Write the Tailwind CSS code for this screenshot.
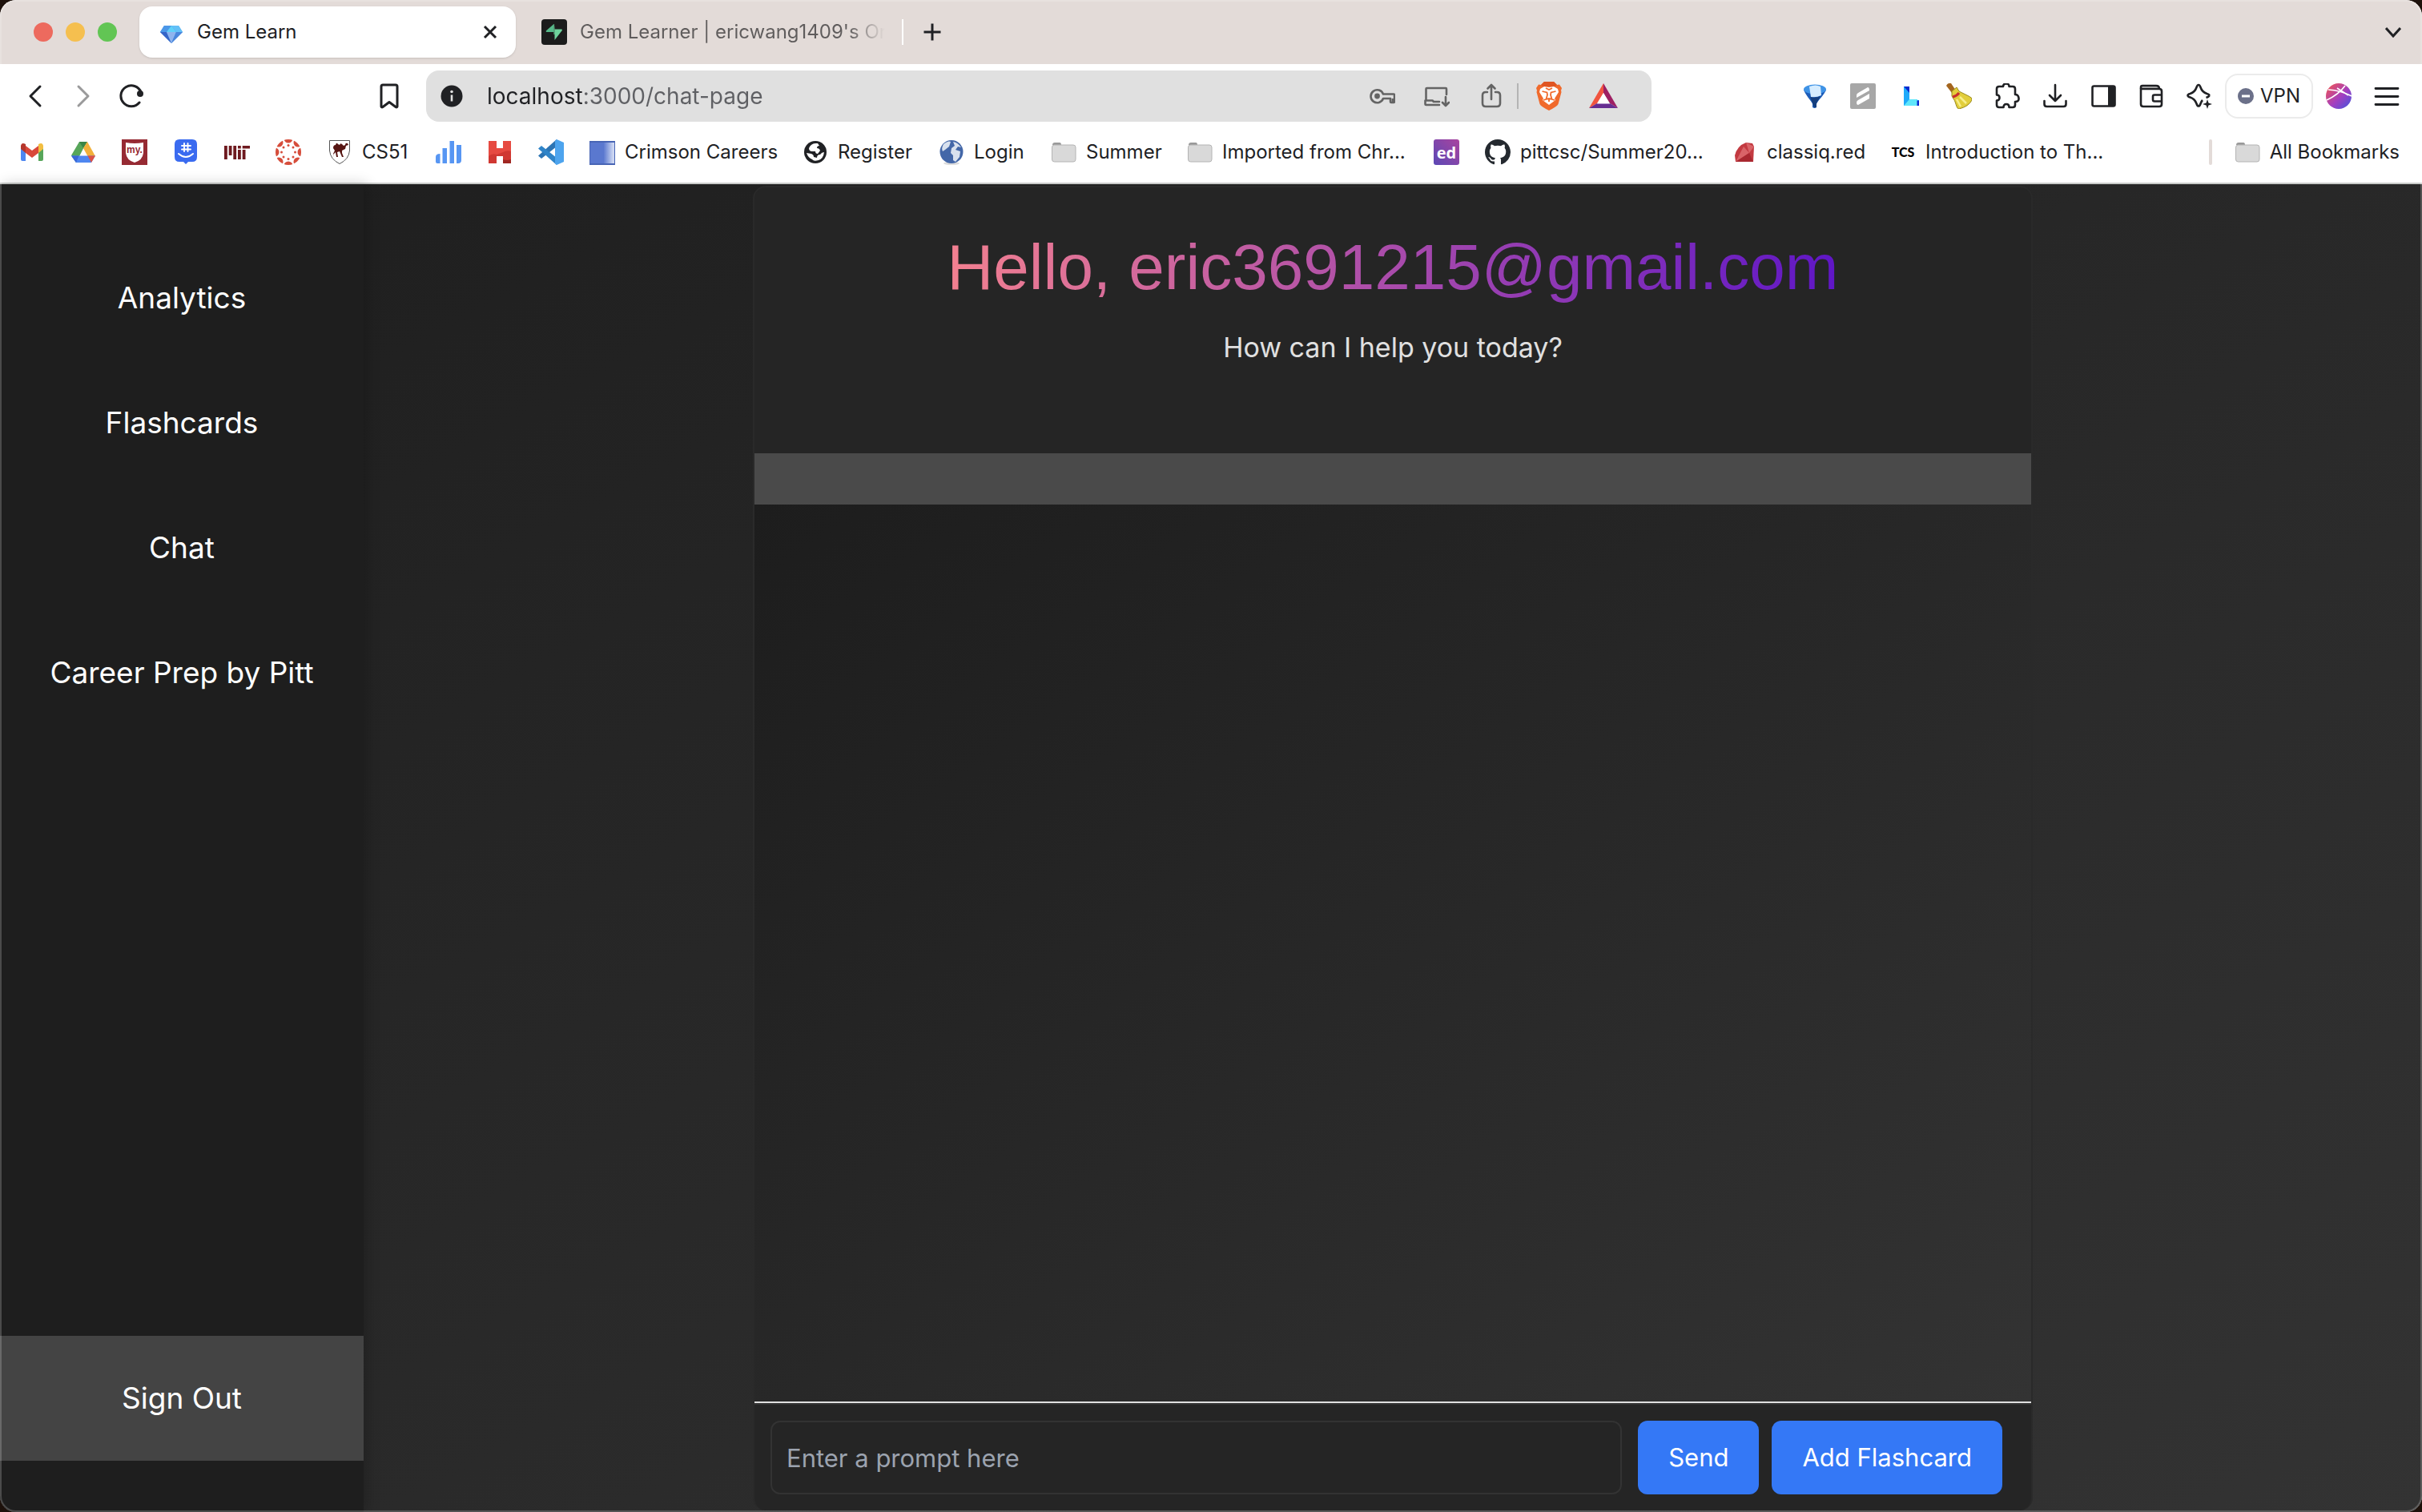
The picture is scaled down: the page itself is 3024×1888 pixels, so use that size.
<!DOCTYPE html>
<html lang="en">
<head>
    <meta charset="UTF-8">
    <meta name="viewport" content="width=device-width, initial-scale=1.0">
    <title>Gem Learn</title>
    <script src="https://cdn.jsdelivr.net/npm/@tailwindcss/browser@4"></script>
</head>
<body class="bg-[#1d110b] font-['Inter',sans-serif] text-[#202124]">
    <div class="relative flex h-screen flex-col overflow-hidden rounded-[20px] bg-white">

        <!-- Tab strip -->
        <div class="flex h-20 shrink-0 items-center bg-[#e3dbd8] pr-[26px] text-[24px]">
            <div class="flex w-[174px] shrink-0 gap-4 pl-[42px]">
                <span class="size-6 rounded-full bg-[#ed6a5e]"></span>
                <span class="size-6 rounded-full bg-[#f5bf4f]"></span>
                <span class="size-6 rounded-full bg-[#62c554]"></span>
            </div>
            <div class="flex h-16 w-[470px] shrink-0 items-center rounded-2xl bg-white pr-5 pl-6 shadow-sm">
                <svg class="mr-4 size-8" viewBox="0 0 32 32">
                    <path d="M7 8h18l5 8-14 14L2 16z" fill="#4a90e2"/>
                    <path d="M7 8h9l-6 8H2z" fill="#4b97e8"/>
                    <path d="M16 8h9l5 8h-8z" fill="#63c0f7"/>
                    <path d="M16 8l6 8H10z" fill="#5fd0f9"/>
                    <path d="M2 16h8l6 14z" fill="#3565c8"/>
                    <path d="M10 16h12l-6 14z" fill="#8fb4ee"/>
                    <path d="M22 16h8L16 30z" fill="#4a86dc"/>
                </svg>
                <a href="#" class="flex-1">Gem Learn</a>
                <button aria-label="Close tab">
                    <svg class="size-6" viewBox="0 0 24 24" fill="none" stroke="#202124" stroke-width="3"><path d="M5 5l14 14M19 5L5 19"/></svg>
                </button>
            </div>
            <div class="flex h-16 w-[482px] shrink-0 items-center pl-8">
                <svg class="mr-4 size-8" viewBox="0 0 32 32">
                    <rect width="32" height="32" rx="4" fill="#1c1c1c"/>
                    <path d="M15.500 6v10H6.500c-1-.2-1-1-.5-1.800z" fill="#56b98a"/>
                    <path d="M16.500 26V12.500H25c1 .2 1.200 1 .6 1.800z" fill="#6fd39c"/>
                    <path d="M15.500 6v13h1V12.500L16 6z" fill="#6fd39c"/>
                </svg>
                <a href="#" class="w-[381px] overflow-hidden whitespace-nowrap bg-linear-[90deg,#5f5c5c_335px,#e3dbd8_381px] bg-clip-text text-transparent">Gem Learner | ericwang1409's Org</a>
            </div>
            <span class="h-8 w-0.5 bg-white"></span>
            <button class="ml-6" aria-label="New tab">
                <svg class="size-6" viewBox="0 0 24 24" fill="none" stroke="#202124" stroke-width="3"><path d="M12 1.500v21M1.500 12h21"/></svg>
            </button>
            <button class="ml-auto" aria-label="Search tabs">
                <svg class="size-5" viewBox="0 0 20 20" fill="none" stroke="#202124" stroke-width="3"><path d="M1 5l9 10 9-10"/></svg>
            </button>
        </div>

        <!-- Toolbar -->
        <div class="flex h-20 shrink-0 items-center px-7">
            <button aria-label="Back"><svg class="size-8" viewBox="0 0 32 32" fill="none" stroke="#202124" stroke-width="3" stroke-linecap="round" stroke-linejoin="round"><path d="M22 4L10 16l12 12"/></svg></button>
            <button class="ml-7" aria-label="Forward"><svg class="size-8" viewBox="0 0 32 32" fill="none" stroke="#9a9a9b" stroke-width="3" stroke-linecap="round" stroke-linejoin="round"><path d="M10 4l12 12-12 12"/></svg></button>
            <button class="ml-7" aria-label="Reload"><svg class="size-8" viewBox="0 0 32 32" fill="none" stroke="#202124" stroke-width="3" stroke-linecap="round"><path d="M26 24A13 13 0 1 1 28 11"/><circle cx="27" cy="13" r="4" fill="#202124" stroke="none"/></svg></button>
            <button class="ml-[290px]" aria-label="Bookmark this tab"><svg class="size-8" viewBox="0 0 32 32" fill="none" stroke="#202124" stroke-width="3" stroke-linejoin="round"><path d="M6 4q0-2 2-2h16q2 0 2 2v25q-.5 1.500-2 .5l-8-6-8 6q-1.500 1-2-.5z"/></svg></button>
            <div class="ml-[30px] flex h-16 w-[1530px] items-center rounded-2xl bg-[#e0e0e0] pr-[42px] pl-4">
                <button aria-label="Site information">
                    <svg class="size-8" viewBox="0 0 32 32"><circle cx="16" cy="16" r="13.500" fill="#202124"/><circle cx="16" cy="10.500" r="1.800" fill="#e0e0e0"/><path d="M16 14.500v8" stroke="#e0e0e0" stroke-width="2.600"/></svg>
                </button>
                <input aria-label="Address" value="localhost:3000/chat-page" class="ml-7 min-w-0 flex-1 bg-linear-[90deg,#202124_122px,#5f6064_122px] bg-clip-text text-[28px] text-transparent">
                <div class="flex items-center gap-9 text-[#646464]">
                    <button aria-label="Passwords"><svg class="size-8" viewBox="0 0 32 32" fill="none" stroke="currentColor" stroke-width="2.600" stroke-linejoin="round"><path d="M17 13.500h13q1 0 1 1V23q0 1-1 1h-3q-1 0-1-1v-4h-9a8 8 0 1 1 0-5.500zM29 19v4"/><circle cx="9.500" cy="16" r="3.400" fill="currentColor" stroke="none"/></svg></button>
                    <button aria-label="Install app"><svg class="size-8" viewBox="0 0 32 32" fill="none" stroke="currentColor" stroke-width="2.600" stroke-linecap="round" stroke-linejoin="round"><path d="M28 14V7q0-1-1-1H3.500q-1 0-1 1v14M19 27H2.500q-1 0-1-1v-4.500h9l1.500 1.500h7M27 17v10M23 24l4 4 4-4"/></svg></button>
                    <button aria-label="Share"><svg class="size-8" viewBox="0 0 32 32" fill="none" stroke="currentColor" stroke-width="2.600" stroke-linecap="round" stroke-linejoin="round"><path d="M11 11H9q-4 0-4 4v10q0 4 4 4h14q4 0 4-4V15q0-4-4-4h-2M16 20V2M11.500 6.500L16 2l4.500 4.500"/></svg></button>
                </div>
                <span class="mr-[22px] ml-4 h-8 w-0.5 bg-[#b4b4b4]"></span>
                <button aria-label="Brave Shields">
                    <svg class="h-9 w-8" viewBox="0 0 32 36">
                        <path d="M10 0h12l4 4 3-.5 3 4.500-1 3 .5 2-4 15Q26 31 16 36 6 31 4.500 28L.500 13 1 11 0 8l3-4.500L6 4z" fill="#f06a2c"/>
                        <path d="M10 0h12l4 4-4 3-6-1-6 1-4-3z" fill="#e05522"/>
                        <path d="M10 6l6 1 6-1 5 3 1 4-5 8 1 2-8 6-8-6 1-2-5-8 1-4z" fill="#fff"/>
                        <path d="M7.500 12l6 1.500.5 3-1.500 5h7l-1.500-5 .5-3 6-1.500M9 23l7-2 7 2M16 22v3M12 8l4 2 4-2" fill="none" stroke="#f06a2c" stroke-width="1.800"/>
                    </svg>
                </button>
                <button class="ml-[34px]" aria-label="Brave Rewards">
                    <svg class="h-8 w-9" viewBox="0 0 36 32"><path d="M18 0L0 31l10-6 8-13z" fill="#f1543f"/><path d="M18 0l18 31-10-6-8-13z" fill="#9e1f63"/><path d="M0 31h36l-10-6H10z" fill="#662d91"/><path d="M18 12l8 13.500H10z" fill="#fff"/></svg>
                </button>
            </div>
            <div class="ml-auto flex items-center gap-7">
                <button aria-label="Filter extension"><svg class="size-8" viewBox="0 0 32 32"><path d="M2 8q1 4 8 13 3 4 3 5v4q3 2 5 0v-4q0-1 3-5 8-9 9-13z" fill="#1c5cb8"/><ellipse cx="16" cy="7.500" rx="14" ry="6" fill="#3f93e6"/><path d="M9 4q8-3 14 0l1 11q-6 3-13 2z" fill="#d5ecff"/><path d="M10 17q7 2 13-1l-5 9v5h-3z" fill="#153f7e"/></svg></button>
                <button aria-label="Scribe"><svg class="size-8" viewBox="0 0 32 32"><rect width="32" height="32" rx="2" fill="#a7a7a7"/><path d="M8 15q0-2 2-3l12-7q2 0 2 4L8 18zM8 24q0-2 2-3l14-8v6L10 27q-2 0-2-3z" fill="#fff"/></svg></button>
                <button aria-label="L extension"><svg class="size-8" viewBox="0 0 32 32"><path d="M7 4h7v17h12v7H7z" fill="#1fa9fa"/><path d="M7 28l7-8h10v8z" fill="#5fe6fb"/><path d="M7 4h7v8zM23.500 21.500H26V28h-2.500z" fill="#0a2bd0"/></svg></button>
                <button aria-label="Cleaner"><svg class="size-8" viewBox="0 0 32 32"><path d="M0 3q2-4 6-3l6 9-5 3z" fill="#a4661f"/><path d="M7 10l6-5 3 5 12 6q5 2 4 5-4 8-16 11-2 0-3-3-2-8-6-13z" fill="#e2ce3c" stroke="#9a8a1c"/><path d="M8 17q5-1 8-5" fill="none" stroke="#c9302c" stroke-width="3"/><path d="M13 20l5 9M17 17l8 8" stroke="#f7ee8c" stroke-width="2.500"/></svg></button>
                <button aria-label="Extensions"><svg class="size-8" viewBox="0 0 32 32" fill="none" stroke="#202124" stroke-width="2.600" stroke-linejoin="round"><path d="M3 7q0-3 3-3h5q0-3.500 3.800-3.500T18.500 4H23q3 0 3 3v7q4 0 4.500 4.500T26 23v4q0 3-3 3h-4.500q0-4-3.500-4t-3.500 4H6q-3 0-3-3v-5.500q3.500 0 3.500-3.500T3 14.500z"/></svg></button>
                <button aria-label="Downloads"><svg class="size-8" viewBox="0 0 32 32" fill="none" stroke="#202124" stroke-width="2.600" stroke-linecap="round" stroke-linejoin="round"><path d="M16 2v20M9 15l7 7 7-7M2.500 22v4q0 3 3 3h21q3 0 3-3v-4"/></svg></button>
                <button aria-label="Side panel"><svg class="size-8" viewBox="0 0 32 32"><rect x="2.500" y="3.500" width="28" height="25" rx="2" fill="none" stroke="#202124" stroke-width="2.600"/><path d="M22 3h8v26h-8z" fill="#202124"/></svg></button>
                <button aria-label="Wallet"><svg class="size-8" viewBox="0 0 32 32" fill="none" stroke="#202124" stroke-width="2.600" stroke-linejoin="round"><path d="M3 7V5q0-2 2-2h17q4 0 4 4" fill="#c9c9c9"/><path d="M3 7v19q0 3 3 3h20q3 0 3-3V10q0-3-3-3zM29 14.500H20q-2 0-2 2v4q0 2 2 2h9"/></svg></button>
                <button aria-label="Leo AI"><svg class="size-8" viewBox="0 0 32 32" fill="none" stroke="#202124" stroke-width="2.600" stroke-linejoin="round"><path d="M15 2q1.500 0 2.500 3 2 6 8 8 3 .8 3 2.500M15 2q-1.500 0-2.500 3-2 6-8 8-3 .8-3 2.200t3 2.300q6 2 8 8 1 3 2.500 3t2.500-3q1-3 2.500-4.500M28.500 15.500q-1 1.500-4 2.500"/><path d="M26 20l1.500 4.500L32 26l-4.500 1.500L26 32l-1.500-4.500L20 26l4.500-1.500z" fill="#202124" stroke="none"/></svg></button>
            </div>
            <button class="ml-4 flex h-14 items-center gap-2 rounded-2xl border-2 border-[#ebebeb] px-3.5 text-[24px]">
                <svg class="size-5" viewBox="0 0 20 20"><circle cx="10" cy="10" r="10" fill="#6b7089"/><path d="M5 10h10" stroke="#fff" stroke-width="3"/></svg>
                VPN
            </button>
            <button class="ml-4" aria-label="Profile"><svg class="size-8" viewBox="0 0 32 32"><defs><linearGradient id="avatar" x1="0" y1="0" x2="1" y2="1"><stop offset=".15" stop-color="#e0506a"/><stop offset=".55" stop-color="#a43fc0"/><stop offset="1" stop-color="#3d55e0"/></linearGradient></defs><circle cx="16" cy="16" r="16" fill="url(#avatar)"/><path d="M3 8q16 1 29 8M1 21Q16 14 24 3M14 6l14 9" fill="none" stroke="#fff" stroke-width="1.600"/></svg></button>
            <button class="ml-7" aria-label="Menu"><svg class="size-8" viewBox="0 0 32 32" stroke="#202124" stroke-width="2.800" stroke-linecap="round"><path d="M2 6.500h28M2 16.500h28M2 26.500h28"/></svg></button>
        </div>

        <!-- Bookmarks bar -->
        <nav class="flex h-[70px] shrink-0 items-start gap-8 border-b-2 border-[#c9cbc9] pt-3.5 pr-7 pl-6 text-[24px] leading-8 whitespace-nowrap">
            <a href="#" aria-label="Gmail"><svg class="size-8" viewBox="0 0 32 32"><path d="M2 10l6 4v13H4q-2 0-2-2z" fill="#4e86f0"/><path d="M24 14l6-4v15q0 2-2 2h-4z" fill="#57a65a"/><path d="M8 8l8 6 8-6v9l-8 6-8-6z" fill="#d9483b"/><path d="M2 12V8q1-5 6-2v11z" fill="#b5362c"/><path d="M24 17V6q5-3 6 2v4z" fill="#f2be42"/></svg></a>
            <a href="#" aria-label="Google Drive"><svg class="size-8" viewBox="0 0 32 32"><path d="M11 3h10l-5 8.500L7 29 1 20z" fill="#57a65a"/><path d="M11 3h10l-5 8z" fill="#3a8446"/><path d="M21 3l10 18h-9.500L16 11z" fill="#f2b03a"/><path d="M1 20.500h30L26 29H7z" fill="#4e86f0"/><path d="M21.500 20.500H31L26 29z" fill="#dd5144"/><path d="M1 20.500h9.500L7 29z" fill="#3a66d6"/></svg></a>
            <a href="#" aria-label="my.harvard"><svg class="size-8" viewBox="0 0 32 32"><path d="M0 0h32v32H0z" fill="#962a33"/><path d="M5 4q11 2 22 0v13q-1 9-11 12Q6 26 5 17z" fill="#fff"/><text x="16" y="17" text-anchor="middle" font-family="Liberation Sans" font-weight="700" font-size="12" fill="#962a33">my.</text></svg></a>
            <a href="#" aria-label="GroupMe"><svg class="size-8" viewBox="0 0 32 32"><path d="M8 0h16q6 0 6 6v16q0 6-6 6h-5l-3 3-3-3H8q-6 0-6-6V6q0-6 6-6z" fill="#3a6bf0"/><path d="M14 5v10M18.500 5v10M11 8h11M11 12.500h11M7 18q9 8 18 0" fill="none" stroke="#fff" stroke-width="1.900" stroke-linecap="round"/></svg></a>
            <a href="#" aria-label="MIT"><svg class="size-8" viewBox="0 0 32 32" fill="#6e1a1f"><path d="M0 8h3.800v17H0zM5.700 8h3.800v12H5.700zM11.300 8h3.800v17h-3.800zM17 8h3.800v3.500H17zM17 13h3.800v12H17zM22.700 13h3.800v12h-3.800zM22.700 8H32v3.500h-9.300z"/></svg></a>
            <a href="#" aria-label="Canvas"><svg class="size-8" viewBox="0 0 32 32"><defs><clipPath id="canvas"><circle cx="16" cy="16" r="16"/></clipPath></defs><g fill="#d64d3b"><g clip-path="url(#canvas)"><circle cx="16" cy="-1" r="5.500"/><circle cx="28" cy="4" r="5.500"/><circle cx="33" cy="16" r="5.500"/><circle cx="28" cy="28" r="5.500"/><circle cx="16" cy="33" r="5.500"/><circle cx="4" cy="28" r="5.500"/><circle cx="-1" cy="16" r="5.500"/><circle cx="4" cy="4" r="5.500"/></g><circle cx="16" cy="7.500" r="1.500"/><circle cx="22" cy="10" r="1.500"/><circle cx="24.500" cy="16" r="1.500"/><circle cx="22" cy="22" r="1.500"/><circle cx="16" cy="24.500" r="1.500"/><circle cx="10" cy="22" r="1.500"/><circle cx="7.500" cy="16" r="1.500"/><circle cx="10" cy="10" r="1.500"/></g></svg></a>
            <a href="#" class="flex w-[104px] gap-3"><svg class="size-8 shrink-0" viewBox="0 0 32 32"><path d="M3.500 1.500h25V14q-1 11-12.500 16.500Q4.500 25 3.500 14z" fill="#fff" stroke="#555"/><path d="M8 11q0-4 3-4 1-4 3-1l2 1q1-3 3-1l2 2 2-1q0-3 3-2l1 2-3 1-1 4-4 2v3l2 5h-2l-3-7-3 1 1 6h-2l-1-6-3 3 1 4H9l-1-5 2-4z" fill="#561512"/></svg>CS51</a>
            <a href="#" aria-label="Analytics"><svg class="size-8" viewBox="0 0 32 32" fill="#5796f3"><path d="M0 22q0-4 5.500-4v12H2q-2 0-2-2zM8.500 11H14v19H8.500zM17.500 2H23v28h-5.500zM26 7h6v19q0 4-4 4h-2z"/></svg></a>
            <a href="#" aria-label="H"><svg class="size-8" viewBox="0 0 32 32"><path d="M2 2h10v9h8V2h10v28H20v-9h-8v9H2z" fill="#e64a41"/><path d="M2 21q5-4 10-2v11H2zM20 16q5-3 10-1v15H20v-9h-8v-2z" fill="#d03832"/><path d="M20 25q5 2 10 0v5H20z" fill="#9f2722"/></svg></a>
            <a href="#" aria-label="VS Code"><svg class="size-8" viewBox="0 0 32 32"><path d="M23 0v9L4 24l-4-3.500z" fill="#2c74b3"/><path d="M0 11.500L4 8l19 15v9z" fill="#2f84c8"/><path d="M23 0l9 4v24l-9 4-2-2V2z" fill="#4da4ee"/></svg></a>
            <a href="#" class="flex w-[234px] gap-3"><svg class="size-8 shrink-0" viewBox="0 0 32 32"><defs><linearGradient id="book"><stop offset=".55" stop-color="#5a78cf"/><stop offset=".95" stop-color="#cdd7f2"/></linearGradient></defs><rect x="0" y="2" width="32" height="30" fill="#4865b5"/><path d="M1 4h30v26H1z" fill="url(#book)"/></svg>Crimson Careers</a>
            <a href="#" class="flex w-[138px] gap-3"><svg class="size-8 shrink-0" viewBox="0 0 32 32"><circle cx="16" cy="16" r="14" fill="#202124"/><path d="M19 5q-8-1-11 6 0 4 4 4h4q0 3 3 3l3-4q-1-3-4-3 0-3 3-3zM5 17l6 1q3 1 3 4l4 1q0-4 4-4 2-3 5-3-1 8-7 10-6 2-8-1-5-2-7-8z" fill="#fff"/></svg>Register</a>
            <a href="#" class="flex w-[108px] gap-3"><svg class="size-8 shrink-0" viewBox="0 0 32 32"><ellipse cx="16" cy="30" rx="10" ry="2" fill="#ddd"/><circle cx="16" cy="15.500" r="14.500" fill="#4367a8"/><path d="M6 6q6-5 9-3l-2 6-5 4-3 2q-2-4 1-9zM18 3q6 1 10 7l-4-1-3 4 6 2-1 7-5 6-3-2v-6l-3-3 1-6 4-3z" fill="#d8e1ee"/></svg>Login</a>
            <a href="#" class="flex w-[138px] gap-3"><svg class="size-8 shrink-0" viewBox="0 0 32 32"><path d="M2 7q0-3 3-3h6q2 0 2 3z" fill="#999"/><rect x="1.500" y="7" width="29.500" height="21" rx="3" fill="#d9d9d9" stroke="#b4b4b4"/></svg>Summer</a>
            <a href="#" class="flex w-[276px] gap-3"><svg class="size-8 shrink-0" viewBox="0 0 32 32"><path d="M2 7q0-3 3-3h6q2 0 2 3z" fill="#999"/><rect x="1.500" y="7" width="29.500" height="21" rx="3" fill="#d9d9d9" stroke="#b4b4b4"/></svg>Imported from Chr...</a>
            <a href="#" aria-label="Ed"><svg class="size-8" viewBox="0 0 32 32"><defs><linearGradient id="ed" x1="1" y1="0" x2="0" y2="1"><stop stop-color="#a9449f"/><stop offset="1" stop-color="#5b48b5"/></linearGradient></defs><rect width="32" height="32" rx="3" fill="url(#ed)"/><text x="16" y="24" text-anchor="middle" font-family="Open Sans" font-weight="700" font-size="20" fill="#fff">ed</text></svg></a>
            <a href="#" class="flex w-[276px] gap-3"><svg class="size-8 shrink-0" viewBox="0 0 16 16"><path fill="#24292f" d="M8 0C3.580 0 0 3.580 0 8c0 3.540 2.290 6.530 5.470 7.590.4.070.55-.17.55-.38 0-.19-.01-.82-.01-1.490-2.010.37-2.530-.49-2.690-.94-.09-.23-.48-.94-.82-1.130-.28-.15-.68-.52-.01-.53.63-.01 1.080.58 1.230.82.72 1.210 1.870.87 2.330.66.07-.52.28-.87.51-1.070-1.780-.2-3.640-.89-3.640-3.950 0-.87.31-1.590.82-2.150-.08-.2-.36-1.020.08-2.120 0 0 .67-.21 2.200.82.64-.18 1.320-.27 2-.27s1.360.09 2 .27c1.530-1.040 2.200-.82 2.200-.82.44 1.100.16 1.920.08 2.120.51.56.82 1.270.82 2.150 0 3.070-1.870 3.750-3.650 3.950.29.25.54.73.54 1.480 0 1.070-.01 1.930-.01 2.200 0 .21.15.46.55.38A8.010 8.010 0 0 0 16 8c0-4.420-3.580-8-8-8z"/></svg>pittcsc/Summer20...</a>
            <a href="#" class="flex w-[166px] gap-3"><svg class="size-8 shrink-0" viewBox="0 0 32 32"><path d="M4 20Q7 8 18 4l8 1 2 4-1 19H5z" fill="#c33a41"/><path d="M5 28L15 9l7 8zM18 4l4 13 6-8z" fill="#d96468"/><path d="M5 28l17-11 5 11z" fill="#a92830"/></svg>classiq.red</a>
            <a href="#" class="flex gap-3"><span class="w-8 shrink-0 text-center font-['Lato',sans-serif] text-[16px] font-black text-black">TCS</span>Introduction to Th...</a>
            <span class="ml-auto h-8 w-1 rounded-full bg-[#e3dbd8]"></span>
            <a href="#" class="-ml-1 flex gap-3"><svg class="size-8 shrink-0" viewBox="0 0 32 32"><path d="M2 7q0-3 3-3h6q2 0 2 3z" fill="#999"/><rect x="1.500" y="7" width="29.500" height="21" rx="3" fill="#d9d9d9" stroke="#b4b4b4"/></svg>All Bookmarks</a>
        </nav>

        <!-- Page -->
        <div class="flex min-h-0 flex-1 bg-linear-to-br from-[#1e1e1e] to-[#333333]">
            <aside class="z-10 flex w-[454px] shrink-0 flex-col bg-[#1e1e1e] py-16 text-center text-[37px] leading-[156px] text-white shadow-[4px_0_16px_rgba(0,0,0,0.2)]">
                <a href="#">Analytics</a>
                <a href="#">Flashcards</a>
                <a href="#">Chat</a>
                <a href="#">Career Prep by Pitt</a>
                <button class="mt-auto bg-[#444444]">Sign Out</button>
            </aside>

            <main class="flex flex-1 justify-center pt-0.5 pb-0.5">
                <div class="flex w-full max-w-[1598px] flex-col overflow-hidden rounded-2xl border-x-2 border-t-2 border-[#2a2a2a] bg-[#252525]">
                    <header class="pt-[52px] pb-[108px] text-center">
                        <h1 class="inline-block bg-linear-[90deg,#f38090,#5f16c6] bg-clip-text font-['Liberation_Sans',sans-serif] text-[80px] leading-[96px] text-transparent">Hello, eric3691215@gmail.com</h1>
                        <p class="mt-7 text-[34px] leading-12 text-[#e0e0e0]">How can I help you today?</p>
                    </header>
                    <div class="h-16 shrink-0 bg-[#4a4a4a]"></div>
                    <div class="flex-1 border-b-2 border-[#e0e0e0] bg-linear-to-br from-[#1d1d1d] to-[#333333]"></div>
                    <form class="flex items-center border-t-2 border-[#333333] py-5 pr-9 pl-5">
                        <input type="text" aria-label="Prompt" placeholder="Enter a prompt here" class="h-[92px] min-w-0 flex-1 rounded-xl border-2 border-[#333333] px-[18px] text-[31px] text-white placeholder:text-[#9ca3af]">
                        <button class="ml-5 h-[92px] rounded-xl bg-[#3478f6] px-[38px] text-[31px] text-white">Send</button>
                        <button class="ml-4 h-[92px] rounded-xl bg-[#3478f6] px-[38px] text-[31px] text-white">Add Flashcard</button>
                    </form>
                </div>
            </main>
        </div>

        <!-- Window edge -->
        <div class="pointer-events-none absolute inset-0 z-20 rounded-[20px] border-2 border-white/20"></div>
    </div>
</body>
</html>
